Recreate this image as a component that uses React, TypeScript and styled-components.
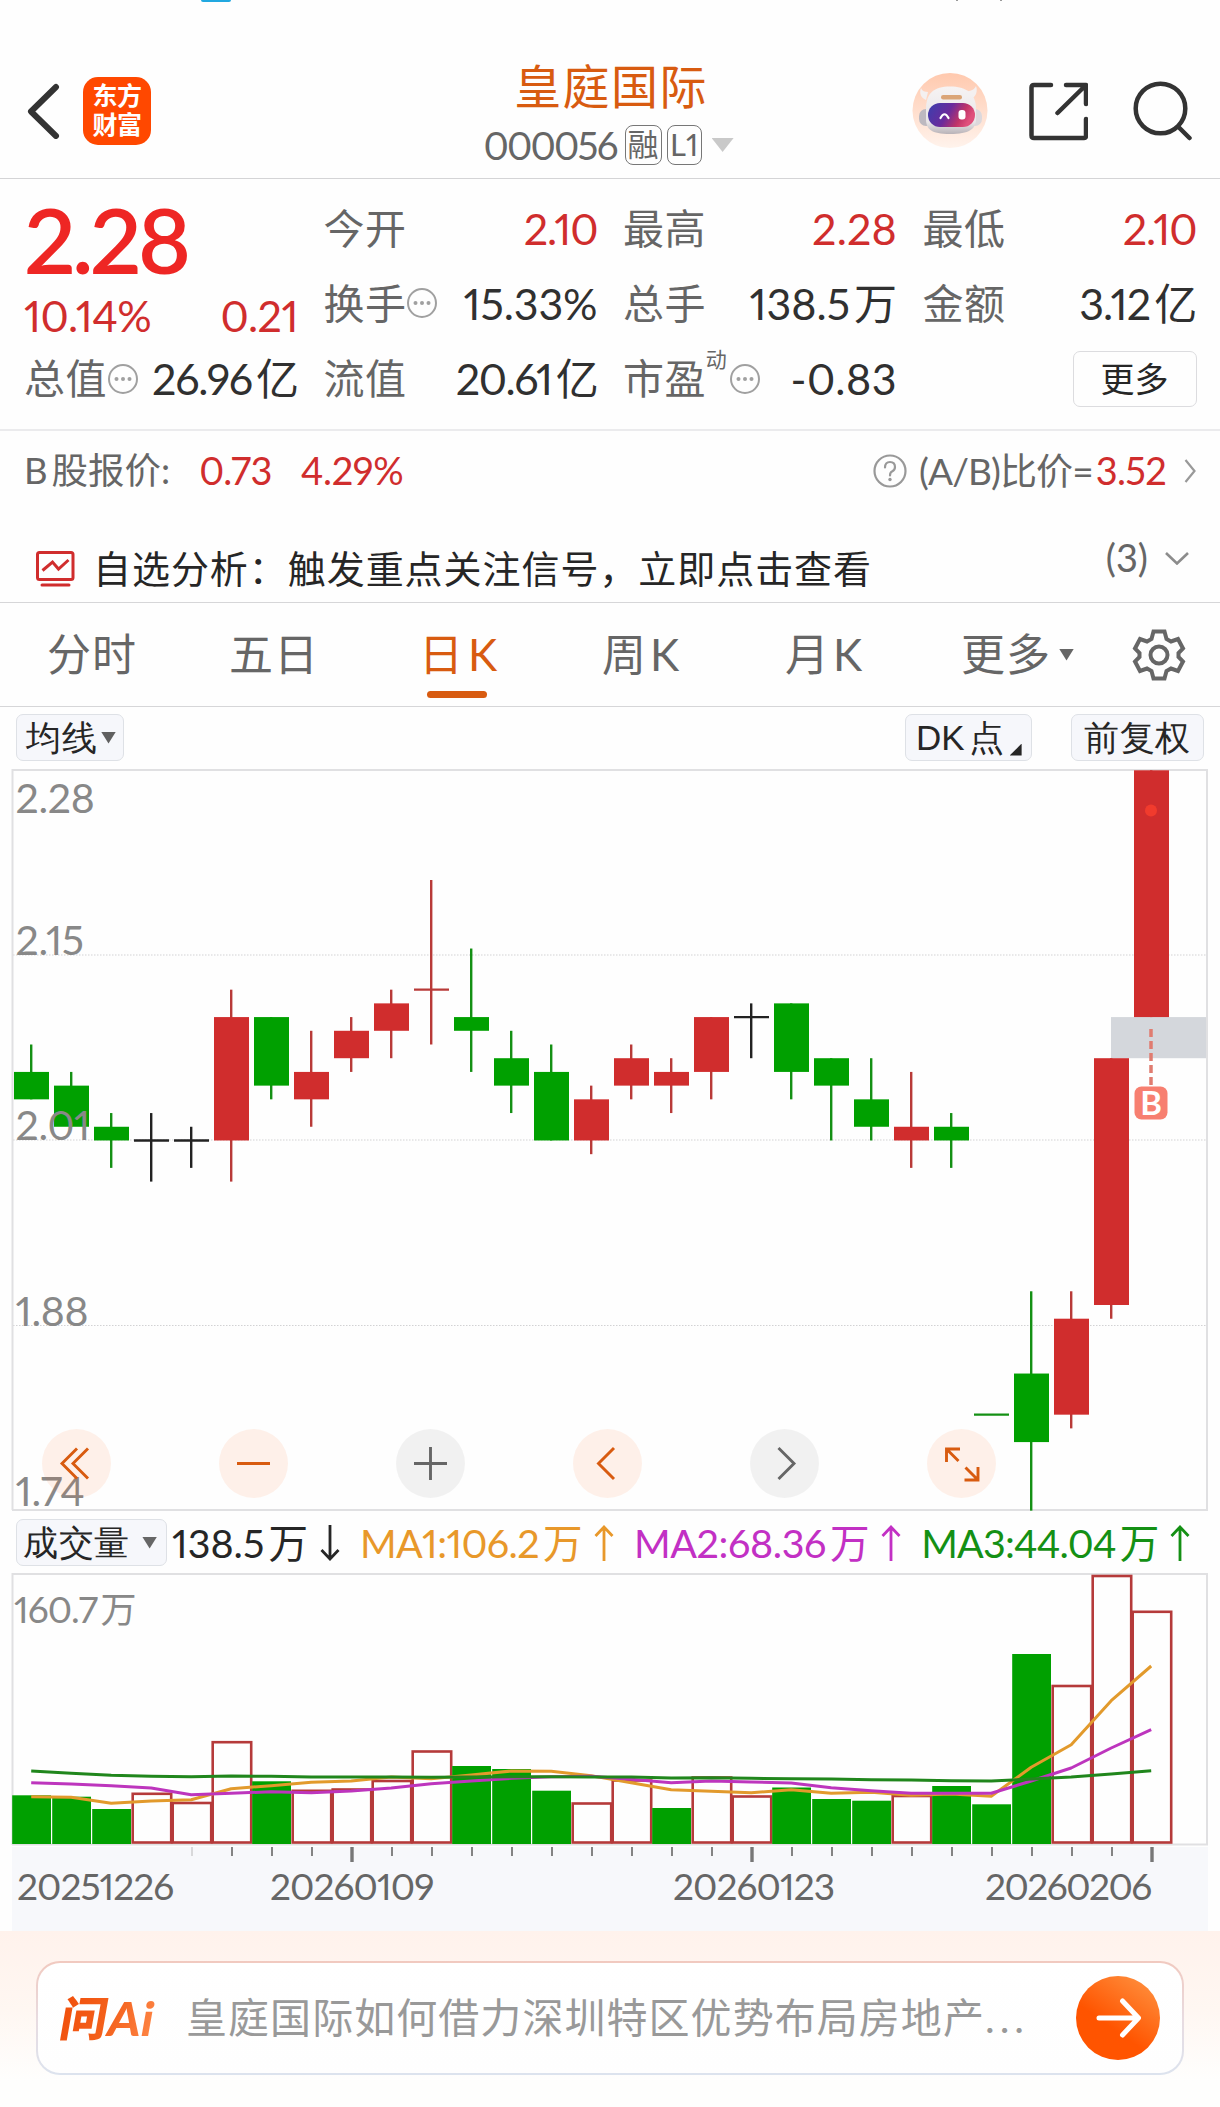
import React from "react";
import styled, { createGlobalStyle, css } from "styled-components";

const RED = "#d02d2d";
const GREEN = "#00a000";
const ORANGE = "#d85b10";
const INK = "#262626";
const GREY = "#666666";

const GlobalStyle = createGlobalStyle`
  * { box-sizing: border-box; }
  body {
    margin: 0;
    background: #fefefe;
    font-family: Lato, "Noto Sans CJK SC", sans-serif;
    font-variant-numeric: proportional-nums;
    color: ${INK};
  }
  svg { display: block; flex: none; }
`;

const Page = styled.div`
  width: 1220px;
  height: 2107px;
  overflow: hidden;
  display: flex;
  flex-direction: column;
`;

const Text = styled.span<{ $size: number; $color?: string; $ls?: number; $weight?: number; $ml?: number; $mr?: number }>`
  flex: none;
  white-space: pre;
  font-size: ${(p) => p.$size}px;
  line-height: 1.2;
  color: ${(p) => p.$color ?? INK};
  letter-spacing: ${(p) => p.$ls ?? 0}px;
  font-weight: ${(p) => p.$weight ?? 400};
  margin-left: ${(p) => p.$ml ?? 0}px;
  margin-right: ${(p) => p.$mr ?? 0}px;
`;

/* Ideographs that follow Latin text or digits keep a little air in front. */
const Han = styled.span<{ $gap?: number }>`
  margin-left: ${(p) => p.$gap ?? 4}px;
`;

/* ---------- status strip + header ---------- */

const StatusStrip = styled.div`
  height: 44px;
  flex: none;
  display: flex;
  align-items: flex-start;
  padding-left: 201px;
`;

const StatusPill = styled.i`
  width: 30px;
  height: 2px;
  border-radius: 0 0 4px 4px;
  background: #22a8e0;
`;

const StatusMark = styled.i<{ $ml: number }>`
  width: 2px;
  height: 1px;
  margin-left: ${(p) => p.$ml}px;
  background: #9a9a9a;
`;

const Header = styled.header`
  height: 135px;
  flex: none;
  display: grid;
  grid-template-columns: 400px 1fr 400px;
  border-bottom: 1.5px solid #d4d4d6;
`;

const HeaderLeft = styled.div`
  display: flex;
  align-items: center;
  padding-left: 25px;
`;

const AppLogo = styled.div`
  width: 68px;
  height: 68px;
  margin-left: 22px;
  border-radius: 15px;
  background: #ff4800;
  color: #fff;
  font: 700 25px/29px "Noto Sans CJK SC", sans-serif;
  letter-spacing: -0.5px;
  text-align: center;
  padding-top: 3px;
`;

const TitleBlock = styled.div`
  display: flex;
  flex-direction: column;
  align-items: center;
`;

const TitleRow = styled.div`
  height: 78px;
  display: flex;
  align-items: center;
  padding: 6px 0 0 2px;
`;

const CodeRow = styled.div`
  height: 40px;
  margin-top: 3px;
  display: flex;
  align-items: center;
  padding-right: 3px;
`;

const Tag = styled.span<{ $w: number; $ml: number }>`
  width: ${(p) => p.$w}px;
  height: 40px;
  margin-left: ${(p) => p.$ml}px;
  border: 1.5px solid #777;
  border-radius: 8px;
  color: ${GREY};
  font-size: 31px;
  line-height: 37px;
  text-align: center;
`;

const HeaderRight = styled.div`
  display: flex;
  align-items: center;
  justify-content: flex-end;
  padding: 0 28px 0 0;
`;

const Robot = () => (
  <svg width="76" height="76" viewBox="0 0 76 76">
    <defs>
      <linearGradient id="halo" x1="0" y1="0" x2="0" y2="1">
        <stop offset="0" stopColor="#ffc9ae" />
        <stop offset="1" stopColor="#fff3ec" />
      </linearGradient>
      <linearGradient id="visor" x1="0" y1="0" x2="1" y2="0.3">
        <stop offset="0" stopColor="#3b3fae" />
        <stop offset="0.5" stopColor="#6a2b9c" />
        <stop offset="0.8" stopColor="#c03468" />
        <stop offset="1" stopColor="#e0507c" />
      </linearGradient>
      <linearGradient id="shell" x1="0" y1="0" x2="0" y2="1">
        <stop offset="0" stopColor="#f6f3f3" />
        <stop offset="0.75" stopColor="#e9e6e8" />
        <stop offset="1" stopColor="#b9b3b8" />
      </linearGradient>
    </defs>
    <circle cx="38" cy="37.500" r="37.500" fill="url(#halo)" />
    <path d="M9 15c1 3 4 4 7 4l-2 8c-5-2-7-7-5-12zM64 13c-1 3-5 5-8 5l3 8c5-2 7-8 5-13z" fill="#f4f0f0" />
    <rect x="7" y="36" width="14" height="17" rx="7" fill="#bdb9c0" />
    <rect x="56" y="36" width="14" height="17" rx="7" fill="#dcd8dc" />
    <path d="M14 36C14 20 22 13.500 38 13.500S64 20 64 36v10c0 10-7 15-26 15s-24-5-24-15z" fill="url(#shell)" />
    <rect x="29" y="22" width="21" height="4.500" rx="2.200" fill="#dba577" />
    <rect x="16" y="30" width="47" height="24" rx="12" fill="url(#visor)" />
    <path d="M28.500 45q4-7.500 8 0" fill="none" stroke="#fff" strokeWidth="2.200" strokeLinecap="round" />
    <rect x="46.500" y="37" width="7" height="9.500" rx="3" fill="#fff" />
  </svg>
);

/* ---------- quote panel ---------- */

const Quote = styled.section`
  height: 252px;
  flex: none;
  padding: 12px 22px 0 24px;
  display: grid;
  grid-template-columns: 274px 274px 274px 274px;
  grid-template-rows: 75px 75px 76px;
  column-gap: 25.5px;
  border-bottom: 2px solid #ebebed;
`;

const Cell = styled.div`
  display: flex;
  align-items: center;
`;

const Spring = styled.span`
  flex: 1;
`;

const PriceCell = styled.div`
  grid-row: span 2;
  display: flex;
  flex-direction: column;
`;

const BigPrice = styled.div`
  height: 100px;
  font-size: 91px;
  line-height: 95px;
  font-weight: 600;
  letter-spacing: -3.8px;
  color: #ee2624;
`;

const ChangeRow = styled.div`
  height: 50px;
  display: flex;
  align-items: center;
  justify-content: space-between;
`;

const Superscript = styled.sup`
  align-self: flex-start;
  margin: 5px 2px 0 0;
  font-size: 21px;
  line-height: 26px;
  color: ${GREY};
`;

const MoreButton = styled.button`
  width: 124px;
  height: 56px;
  padding: 0;
  border: 1.5px solid #dcdcdf;
  border-radius: 7px;
  background: #fefefe;
  font: 400 34px/52px Lato, "Noto Sans CJK SC", sans-serif;
  color: ${INK};
`;

const Label = ({ children }: { children: string }) => (
  <Text $size={41} $ls={0.4} $color={GREY}>{children}</Text>
);

const Value = ({ children, red, ls, unit }: { children: string; red?: boolean; ls?: number; unit?: string }) => (
  <Text $size={43} $ls={ls ?? -0.5} $color={red ? RED : "#303030"}>
    {children}
    {unit && <Han>{unit}</Han>}
  </Text>
);

const InfoDots = () => (
  <svg width="31" height="31" viewBox="0 0 31 31">
    <circle cx="16" cy="15" r="14" fill="none" stroke="#a0a0a0" strokeWidth="2" />
    <g fill="#a0a0a0">
      <circle cx="9.500" cy="15" r="2" />
      <circle cx="16" cy="15" r="2" />
      <circle cx="22.500" cy="15" r="2" />
    </g>
  </svg>
);

/* ---------- B share + analysis rows ---------- */

const BShareRow = styled.section`
  height: 80px;
  flex: none;
  display: flex;
  align-items: center;
  padding: 0 24px 0 24px;
`;

const AnalysisRow = styled.section`
  height: 92px;
  flex: none;
  display: flex;
  padding: 0 31px 0 36px;
  border-bottom: 1.5px solid #d6d6d8;
`;

const AnalysisMessage = styled.div`
  height: 100%;
  display: flex;
  align-items: center;
  padding-top: 24px;
`;

const AnalysisCount = styled.div`
  margin-left: auto;
  height: 94px;
  display: flex;
  align-items: center;
`;

/* ---------- period tabs ---------- */

const Tabs = styled.nav`
  height: 104px;
  flex: none;
  display: flex;
  padding-left: 47px;
  border-bottom: 1.5px solid #d6d6d8;
`;

const Tab = styled.div<{ $w: number; $active?: boolean }>`
  width: ${(p) => p.$w}px;
  height: 102px;
  flex: none;
  display: flex;
  flex-direction: column;
  align-items: flex-start;
  padding-top: 25px;
  font-size: 44px;
  line-height: 53px;
  letter-spacing: 1px;
  color: ${(p) => (p.$active ? ORANGE : GREY)};
  ${(p) =>
    p.$active &&
    css`
      &::after {
        content: "";
        width: 60px;
        height: 7px;
        margin: 10px 0 0 8px;
        border-radius: 4px;
        background: ${ORANGE};
      }
    `}
`;

const TabLine = styled.span<{ $gap?: number }>`
  display: flex;
  align-items: center;
  gap: ${(p) => p.$gap ?? 0}px;
`;

const GearBox = styled.div`
  display: flex;
  align-items: center;
`;

const Triangle = styled.i<{ $w: number; $h: number; $color: string; $ml?: number }>`
  flex: none;
  width: ${(p) => p.$w}px;
  height: ${(p) => p.$h}px;
  margin-left: ${(p) => p.$ml ?? 0}px;
  background: ${(p) => p.$color};
  clip-path: polygon(0 0, 100% 0, 50% 100%);
`;

/* ---------- chart ---------- */

const ChartBar = styled.div`
  height: 62px;
  flex: none;
  display: flex;
  align-items: flex-start;
  padding: 7px 16px 0 16px;
`;

const Chip = styled.button<{ $w: number; $ml?: number; $pl: number }>`
  width: ${(p) => p.$w}px;
  height: 47px;
  flex: none;
  margin: 0 0 0 ${(p) => p.$ml ?? 0}px;
  padding: 0 0 0 ${(p) => p.$pl}px;
  display: flex;
  align-items: center;
  border: 1.5px solid #dee1e6;
  border-radius: 7px;
  background: #f6f7fb;
`;

const CornerMark = styled.i`
  width: 12px;
  height: 12px;
  margin: 24px 0 0 6px;
  background: ${INK};
  clip-path: polygon(100% 0, 100% 100%, 0 100%);
`;

const ChartWrap = styled.div`
  position: relative;
  height: 743px;
  flex: none;
`;

const Controls = styled.div`
  position: absolute;
  left: 42px;
  top: 660px;
  display: flex;
  gap: 108px;
`;

const RoundButton = styled.button<{ $muted?: boolean }>`
  width: 69px;
  height: 69px;
  padding: 0;
  border: 0;
  border-radius: 50%;
  background: ${(p) => (p.$muted ? "rgba(0,0,0,0.052)" : "rgba(255,100,20,0.09)")};
`;

const VolumeBar = styled.div`
  height: 61px;
  flex: none;
  display: flex;
  align-items: center;
  padding: 0 16px;
`;

const Axis = styled.div`
  height: 84px;
  flex: none;
  margin: 0 12px;
  background: #f7f8fb;
`;

const Dates = styled.div`
  display: flex;
  padding: 0 0 0 5px;
`;

const DateLabel = styled.span<{ $w: number; $ls?: number }>`
  width: ${(p) => p.$w}px;
  font-size: 37px;
  line-height: 44px;
  letter-spacing: ${(p) => p.$ls ?? -0.9}px;
  color: ${GREY};
`;

type Candle = [kind: "g" | "r" | "k", high: number, top: number, bottom: number, low: number];

const candles: Candle[] = [
  ["g", 2.08, 2.06, 2.04, 2.04],
  ["g", 2.06, 2.05, 2.02, 2.02],
  ["g", 2.03, 2.02, 2.01, 1.99],
  ["k", 2.03, 2.01, 2.01, 1.98],
  ["k", 2.02, 2.01, 2.01, 1.99],
  ["r", 2.12, 2.1, 2.01, 1.98],
  ["g", 2.1, 2.1, 2.05, 2.04],
  ["r", 2.09, 2.06, 2.04, 2.02],
  ["r", 2.1, 2.09, 2.07, 2.06],
  ["r", 2.12, 2.11, 2.09, 2.07],
  ["r", 2.2, 2.12, 2.12, 2.08],
  ["g", 2.15, 2.1, 2.09, 2.06],
  ["g", 2.09, 2.07, 2.05, 2.03],
  ["g", 2.08, 2.06, 2.01, 2.01],
  ["r", 2.05, 2.04, 2.01, 2.0],
  ["r", 2.08, 2.07, 2.05, 2.04],
  ["r", 2.07, 2.06, 2.05, 2.03],
  ["r", 2.1, 2.1, 2.06, 2.04],
  ["k", 2.11, 2.1, 2.1, 2.07],
  ["g", 2.11, 2.11, 2.06, 2.04],
  ["g", 2.07, 2.07, 2.05, 2.01],
  ["g", 2.07, 2.04, 2.02, 2.01],
  ["r", 2.06, 2.02, 2.01, 1.99],
  ["g", 2.03, 2.02, 2.01, 1.99],
  ["g", 1.81, 1.81, 1.81, 1.81],
  ["g", 1.9, 1.84, 1.79, 1.74],
  ["r", 1.9, 1.88, 1.81, 1.8],
  ["r", 2.07, 2.07, 1.89, 1.88],
  ["r", 2.28, 2.28, 2.1, 2.1],
];

/* Days whose volume bar is drawn as a filled (falling) one. */
const falling = new Set([0, 1, 2, 6, 11, 12, 13, 16, 19, 20, 21, 23, 24, 25]);

const volumes = [
  48.7, 47.3, 35, 51.7, 42.5, 103.3, 62.7, 54.7, 56, 64.5, 94, 78, 75, 53.3, 42, 65, 36, 68, 49, 56.5, 45, 43.3,
  49.5, 58, 39.7, 190, 159.5, 269.5, 233.7,
];
const ma1 = [
  47.3, 46.7, 40.7, 43, 44.3, 55.3, 58.3, 61.7, 63, 67, 65.3, 69, 73, 72.7, 68.3, 61.3, 54.3, 52.7, 51.3, 54.3,
  50.7, 51.7, 48.7, 50, 47.7, 76.7, 99.3, 143.3, 178,
];
const ma2 = [
  61.3, 60, 58.3, 56, 49.3, 50.7, 52.3, 51.3, 53, 56, 60.3, 63, 65.7, 67.3, 67.7, 64.7, 61.3, 63, 62, 61, 56.3,
  53.3, 50.7, 50.7, 50.7, 63, 76, 96, 114.3,
];
const ma3 = [
  73, 70.7, 68.7, 67.7, 67.3, 68, 67.7, 67, 67, 67, 66.7, 67, 67.3, 67.3, 67, 67, 66, 66.3, 65.7, 65.3, 65, 64.3,
  64, 63.3, 63, 65, 67, 70, 73.3,
];

const cx = (i: number) => 31.2 + 40 * i;
const py = (p: number) => 1.3 + (2.28 - p) * 1371;
const tone = { g: GREEN, r: RED, k: "#222222" };
const wickTone = { g: "#149014", r: "#b83a38", k: "#222222" };

const priceLabels: [string, number][] = [
  ["2.28", 43.5],
  ["2.15", 185.5],
  ["2.01", 370.5],
  ["1.88", 556.5],
  ["1.74", 737],
];

const PriceChart = () => (
  <svg width="1220" height="743" viewBox="0 0 1220 743">
    {[186, 371, 556.5].map((y) => (
      <line key={y} x1="13" x2="1207" y1={y} y2={y} stroke="#d2d2d4" strokeWidth="1.200" strokeDasharray="1.500 1.500" />
    ))}
    <rect x="1111" y={py(2.1)} width="96" height={py(2.07) - py(2.1)} fill="#d4d7dc" />
    <path d="M12.500 741V1H1207V741H12" fill="none" stroke="#e0e0e2" strokeWidth="2" />
    {candles.map(([kind, high, top, bottom, low], i) => {
      const h = py(bottom) - py(top);
      return (
        <g key={i}>
          {high > low && (
            <line x1={cx(i)} x2={cx(i)} y1={py(high)} y2={py(low)} stroke={wickTone[kind]} strokeWidth="2.400" />
          )}
          {h > 0 ? (
            <rect x={cx(i) - 17.2} y={py(top)} width="35" height={h} fill={tone[kind]} />
          ) : (
            <line x1={cx(i) - 17.2} x2={cx(i) + 17.8} y1={py(top)} y2={py(top)} stroke={wickTone[kind]} strokeWidth="2.400" />
          )}
        </g>
      );
    })}
    <circle cx="1151" cy="41.500" r="6" fill="#f13b2d" />
    <line x1="1151" x2="1151" y1="260" y2="317" stroke="#e07c70" strokeWidth="3.500" strokeDasharray="8 4" />
    <rect x="1134.500" y="317.500" width="33" height="33" rx="7" fill="#f77f70" />
    <text x="1151.200" y="345.500" textAnchor="middle" fontSize="33" fontWeight="700" fill="#fff">B</text>
    {priceLabels.map(([t, y]) => (
      <text key={t} x="15.500" y={y} fontSize="41" fill="#888" letterSpacing="-0.3">{t}</text>
    ))}
  </svg>
);

const toLine = (values: number[]) => values.map((v, i) => `${cx(i)},${271 - v}`).join(" ");

const VolumeChart = () => (
  <svg width="1220" height="274" viewBox="0 0 1220 274">
    <path d="M12.500 272V1H1207V271.500H12" fill="none" stroke="#e0e0e2" strokeWidth="2" />
    <text x="14" y="50" fontSize="37" fill="#888" letterSpacing="-0.900">
      160.7<tspan dx="3.500" fontSize="36">万</tspan>
    </text>
    {volumes.map((v, i) =>
      falling.has(i) ? (
        <rect key={i} x={cx(i) - 19} y={271 - v} width="38.800" height={v} fill={GREEN} />
      ) : (
        <rect key={i} x={cx(i) - 18.5} y={272.5 - v} width="38.500" height={v - 3} fill="#fefefe" stroke="#b53a3a" strokeWidth="2.600" />
      ),
    )}
    <g fill="none" strokeWidth="3" strokeLinejoin="round">
      <polyline points={toLine(ma1)} stroke="#e29a2c" />
      <polyline points={toLine(ma2)} stroke="#bd35bd" />
      <polyline points={toLine(ma3)} stroke="#20861c" />
    </g>
  </svg>
);

const Ticks = () => (
  <svg width="1196" height="17" viewBox="12 0 1196 17">
    {candles.map((_, i) => {
      if (i < 4) return null;
      const major = i % 10 === 8;
      return (
        <line
          key={i}
          x1={cx(i) + 0.8}
          x2={cx(i) + 0.8}
          y1="0"
          y2={major ? 15 : 9}
          stroke={i === 4 ? "#d4d4d6" : "#777"}
          strokeWidth={major ? 3.4 : 1.8}
        />
      );
    })}
  </svg>
);

const ArrowSvg = styled.svg`
  margin-left: 12px;
`;

const Arrow = ({ down, color }: { down?: boolean; color: string }) => (
  <ArrowSvg width="20" height="36" viewBox="0 0 20 36">
    <path
      d={down ? "M10 0V34M1.500 25L10 34L18.500 25" : "M10 36V2M1.500 11L10 2L18.500 11"}
      fill="none"
      stroke={color}
      strokeWidth="2.800"
    />
  </ArrowSvg>
);

const controls: { muted?: boolean; d: string }[] = [
  { d: "M35 19.500L20 34.500L35 49.500M46 19.500L31 34.500L46 49.500" },
  { d: "M18 34.500H51" },
  { muted: true, d: "M18 34.500H51M34.500 18V51" },
  { d: "M41 19L25.500 34.500L41 50" },
  { muted: true, d: "M28.500 19L44 34.500L28.500 50" },
  { d: "M19.500 33V20H33M20 20.500L31.500 32M51 38V51H37.500M50.500 50.500L38.500 38.500" },
];

/* ---------- AI prompt ---------- */

const AskArea = styled.footer`
  flex: 1;
  padding: 30px 36px 0;
  background: linear-gradient(#fff2ec, #fff7f2 45%, #fefefd 85%);
`;

const AskBox = styled.div`
  height: 114px;
  padding: 0 22px 0 20px;
  display: flex;
  align-items: center;
  border: 2.5px solid transparent;
  border-radius: 24px;
  background:
    linear-gradient(#fff, #fefefe) padding-box,
    linear-gradient(#f1c9bf, #e8dbe0 50%, #dce3ee) border-box;
`;

const AskLogo = styled.span`
  width: 102px;
  padding-left: 3px;
  font: 900 47px/54px Lato, "Noto Sans CJK SC", sans-serif;
  letter-spacing: 0.5px;
  white-space: nowrap;
  transform: skewX(-10deg);
  background: linear-gradient(100deg, #f04e0a, #f4611c 50%, #ff8a4a);
  background-clip: text;
  -webkit-background-clip: text;
  color: transparent;
`;

const Dots = styled.span`
  letter-spacing: 5px;
`;

const SendButton = styled.button`
  width: 84px;
  height: 84px;
  margin-left: auto;
  padding: 0;
  border: 0;
  border-radius: 50%;
  background: linear-gradient(215deg, #ff9240 5%, #ff5400 60%);
`;

const Spaced = styled.span<{ $ml: number }>`
  display: flex;
  flex: none;
  margin-left: ${(p) => p.$ml}px;
`;

export default function App() {
  return (
    <>
      <GlobalStyle />
      <Page>
        <StatusStrip>
          <StatusPill />
          <StatusMark $ml={725} />
          <StatusMark $ml={42} />
        </StatusStrip>

        <Header>
          <HeaderLeft>
            <svg width="36" height="56" viewBox="0 0 36 56">
              <path d="M31 4L6 28.500L31 53" fill="none" stroke="#333" strokeWidth="6" strokeLinecap="round" strokeLinejoin="round" />
            </svg>
            <AppLogo>东方<br />财富</AppLogo>
          </HeaderLeft>
          <TitleBlock>
            <TitleRow>
              <Text $size={47} $ls={1.4} $color={ORANGE}>皇庭国际</Text>
            </TitleRow>
            <CodeRow>
              <Text $size={38.5} $ls={-1.8} $color={GREY}>000056</Text>
              <Tag $w={37} $ml={8}>融</Tag>
              <Tag $w={35} $ml={5}>L1</Tag>
              <Triangle $w={22} $h={14} $ml={10} $color="#c9c9c9" />
            </CodeRow>
          </TitleBlock>
          <HeaderRight>
            <Robot />
            <Spaced $ml={40}>
              <svg width="60" height="60" viewBox="0 0 60 60">
                <path
                  d="M23 4H6Q3.500 4 3.500 6.500V54.500Q3.500 57 6 57H56Q58 57 58 54.500V38M38 4H58V23M57 5L29.500 32"
                  fill="none"
                  stroke="#333"
                  strokeWidth="4.500"
                  strokeLinecap="round"
                  strokeLinejoin="round"
                />
              </svg>
            </Spaced>
            <Spaced $ml={44}>
              <svg width="60" height="62" viewBox="0 0 60 62">
                <circle cx="28.500" cy="28.500" r="24.800" fill="none" stroke="#333" strokeWidth="4.500" />
                <path d="M46.500 47L57.500 58" stroke="#333" strokeWidth="4.500" strokeLinecap="round" />
              </svg>
            </Spaced>
          </HeaderRight>
        </Header>

        <Quote>
          <PriceCell>
            <BigPrice>2.28</BigPrice>
            <ChangeRow>
              <Value red>10.14%</Value>
              <Value red>0.21</Value>
            </ChangeRow>
          </PriceCell>
          <Cell><Label>今开</Label><Spring /><Value red ls={-1}>2.10</Value></Cell>
          <Cell><Label>最高</Label><Spring /><Value red ls={0.2}>2.28</Value></Cell>
          <Cell><Label>最低</Label><Spring /><Value red ls={-1}>2.10</Value></Cell>
          <Cell><Label>换手</Label><InfoDots /><Spring /><Value ls={-0.1}>15.33%</Value></Cell>
          <Cell><Label>总手</Label><Spring /><Value ls={0} unit="万">138.5</Value></Cell>
          <Cell><Label>金额</Label><Spring /><Value ls={-0.8} unit="亿">3.12</Value></Cell>
          <Cell><Label>总值</Label><InfoDots /><Spring /><Value ls={-1.1} unit="亿">26.96</Value></Cell>
          <Cell><Label>流值</Label><Spring /><Value ls={-1.3} unit="亿">20.61</Value></Cell>
          <Cell><Label>市盈</Label><Superscript>动</Superscript><InfoDots /><Spring /><Value ls={0.5}>-0.83</Value></Cell>
          <Cell><Spring /><MoreButton>更多</MoreButton></Cell>
        </Quote>

        <BShareRow>
          <Text $size={36.5} $color={GREY}>B<Han>股报价:</Han></Text>
          <Text $size={38} $ls={-0.7} $ml={29} $color={RED}>0.73</Text>
          <Text $size={38} $ls={-0.4} $ml={29} $color={RED}>4.29%</Text>
          <Spring />
          <svg width="34" height="34" viewBox="0 0 34 34">
            <circle cx="17" cy="17" r="15.500" fill="none" stroke="#999" strokeWidth="2.200" />
            <path d="M12 13.500q0-5.500 5-5.500t5 5q0 3-3 4.500-2 1-2 4" fill="none" stroke="#999" strokeWidth="2.200" strokeLinecap="round" />
            <circle cx="17" cy="25.500" r="1.700" fill="#999" />
          </svg>
          <Text $size={37} $ls={-0.9} $ml={12} $color={GREY}>(A/B)比价=</Text>
          <Text $size={38} $ls={-0.7} $ml={3} $color={RED}>3.52</Text>
          <Spaced $ml={18}>
            <svg width="12" height="24" viewBox="0 0 12 24">
              <path d="M1.500 1L10.500 12L1.500 23" fill="none" stroke="#999" strokeWidth="2.200" />
            </svg>
          </Spaced>
        </BShareRow>

        <AnalysisRow>
          <AnalysisMessage>
            <svg width="39" height="36" viewBox="0 0 39 36">
              <g fill="none" stroke={RED} strokeWidth="3">
                <rect x="1.500" y="1.500" width="35.500" height="27" rx="2" />
                <path d="M6.500 19.500L16.500 11L22.500 18L32.500 9" />
                <path d="M6 34H33" strokeLinecap="round" />
              </g>
            </svg>
            <Text $size={38} $ls={0.95} $ml={18}>自选分析：触发重点关注信号，立即点击查看</Text>
          </AnalysisMessage>
          <AnalysisCount>
            <Text $size={38} $color={GREY}>(3)</Text>
            <Spaced $ml={17}>
              <svg width="24" height="13" viewBox="0 0 24 13">
                <path d="M1 1L12 11.500L23 1" fill="none" stroke="#8c8c8c" strokeWidth="2.600" />
              </svg>
            </Spaced>
          </AnalysisCount>
        </AnalysisRow>

        <Tabs>
          <Tab $w={182}>分时</Tab>
          <Tab $w={190}>五日</Tab>
          <Tab $w={183} $active><TabLine $gap={4}>日<span>K</span></TabLine></Tab>
          <Tab $w={183}><TabLine $gap={3}>周<span>K</span></TabLine></Tab>
          <Tab $w={176}><TabLine $gap={3}>月<span>K</span></TabLine></Tab>
          <Tab $w={171}>
            <TabLine>更多<Triangle $w={15} $h={12} $ml={8} $color={GREY} /></TabLine>
          </Tab>
          <GearBox>
            <svg width="54" height="54" viewBox="0 0 54 54">
              <path
                d="M21.500 3.500H32.500L34.500 11L39 13.500L46 11L51 20.500L46.500 25V29L51 33.500L46 43L39 40.500L34.500 43L32.500 50.500H21.500L19.500 43L15 40.500L8 43L3 33.500L7.500 29V25L3 20.500L8 11L15 13.500L19.500 11Z"
                fill="none"
                stroke={GREY}
                strokeWidth="4"
              />
              <circle cx="27" cy="27" r="8.500" fill="none" stroke={GREY} strokeWidth="4" />
            </svg>
          </GearBox>
        </Tabs>

        <ChartBar>
          <Chip $w={108} $pl={9}>
            <Text $size={35} $ls={0.5}>均线</Text>
            <Triangle $w={15} $h={12} $ml={4} $color="#606060" />
          </Chip>
          <Spring />
          <Chip $w={127} $pl={10}>
            <Text $size={35}>DK<Han>点</Han></Text>
            <CornerMark />
          </Chip>
          <Chip $w={133} $ml={39} $pl={12}>
            <Text $size={35} $ls={0.7}>前复权</Text>
          </Chip>
        </ChartBar>

        <ChartWrap>
          <PriceChart />
          <Controls>
            {controls.map((c, i) => (
              <RoundButton key={i} $muted={c.muted}>
                <svg width="69" height="69" viewBox="0 0 69 69">
                  <path d={c.d} fill="none" stroke={c.muted ? GREY : ORANGE} strokeWidth="2.900" />
                </svg>
              </RoundButton>
            ))}
          </Controls>
        </ChartWrap>

        <VolumeBar>
          <Chip $w={151} $pl={6}>
            <Text $size={35} $ls={0.7}>成交量</Text>
            <Triangle $w={15} $h={12} $ml={12} $color={GREY} />
          </Chip>
          <Text $size={39.5} $ml={5}>138.5<Han>万</Han></Text>
          <Arrow down color={INK} />
          <Text $size={39.5} $ls={-0.6} $ml={20} $color="#e8982a">MA1:106.2<Han>万</Han></Text>
          <Arrow color="#e8982a" />
          <Text $size={39.5} $ls={-0.4} $ml={20} $color="#c230c4">MA2:68.36<Han>万</Han></Text>
          <Arrow color="#c230c4" />
          <Text $size={39.5} $ls={-0.8} $ml={20} $color="#149014">MA3:44.04<Han>万</Han></Text>
          <Arrow color="#149014" />
        </VolumeBar>

        <VolumeChart />

        <Axis>
          <Ticks />
          <Dates>
            <DateLabel $w={253}>20251226</DateLabel>
            <DateLabel $w={403}>20260109</DateLabel>
            <DateLabel $w={312}>20260123</DateLabel>
            <DateLabel $w={180} $ls={-1.5}>20260206</DateLabel>
          </Dates>
        </Axis>

        <AskArea>
          <AskBox>
            <AskLogo>问Ai</AskLogo>
            <Text $size={41} $ls={1.05} $ml={26} $color="#999">皇庭国际如何借力深圳特区优势布局房地产<Dots>...</Dots></Text>
            <SendButton>
              <svg width="84" height="84" viewBox="0 0 84 84">
                <path d="M23 42H62M46.500 25L62.500 42L46.500 59" fill="none" stroke="#fff" strokeWidth="5" strokeLinecap="round" strokeLinejoin="round" />
              </svg>
            </SendButton>
          </AskBox>
        </AskArea>
      </Page>
    </>
  );
}
